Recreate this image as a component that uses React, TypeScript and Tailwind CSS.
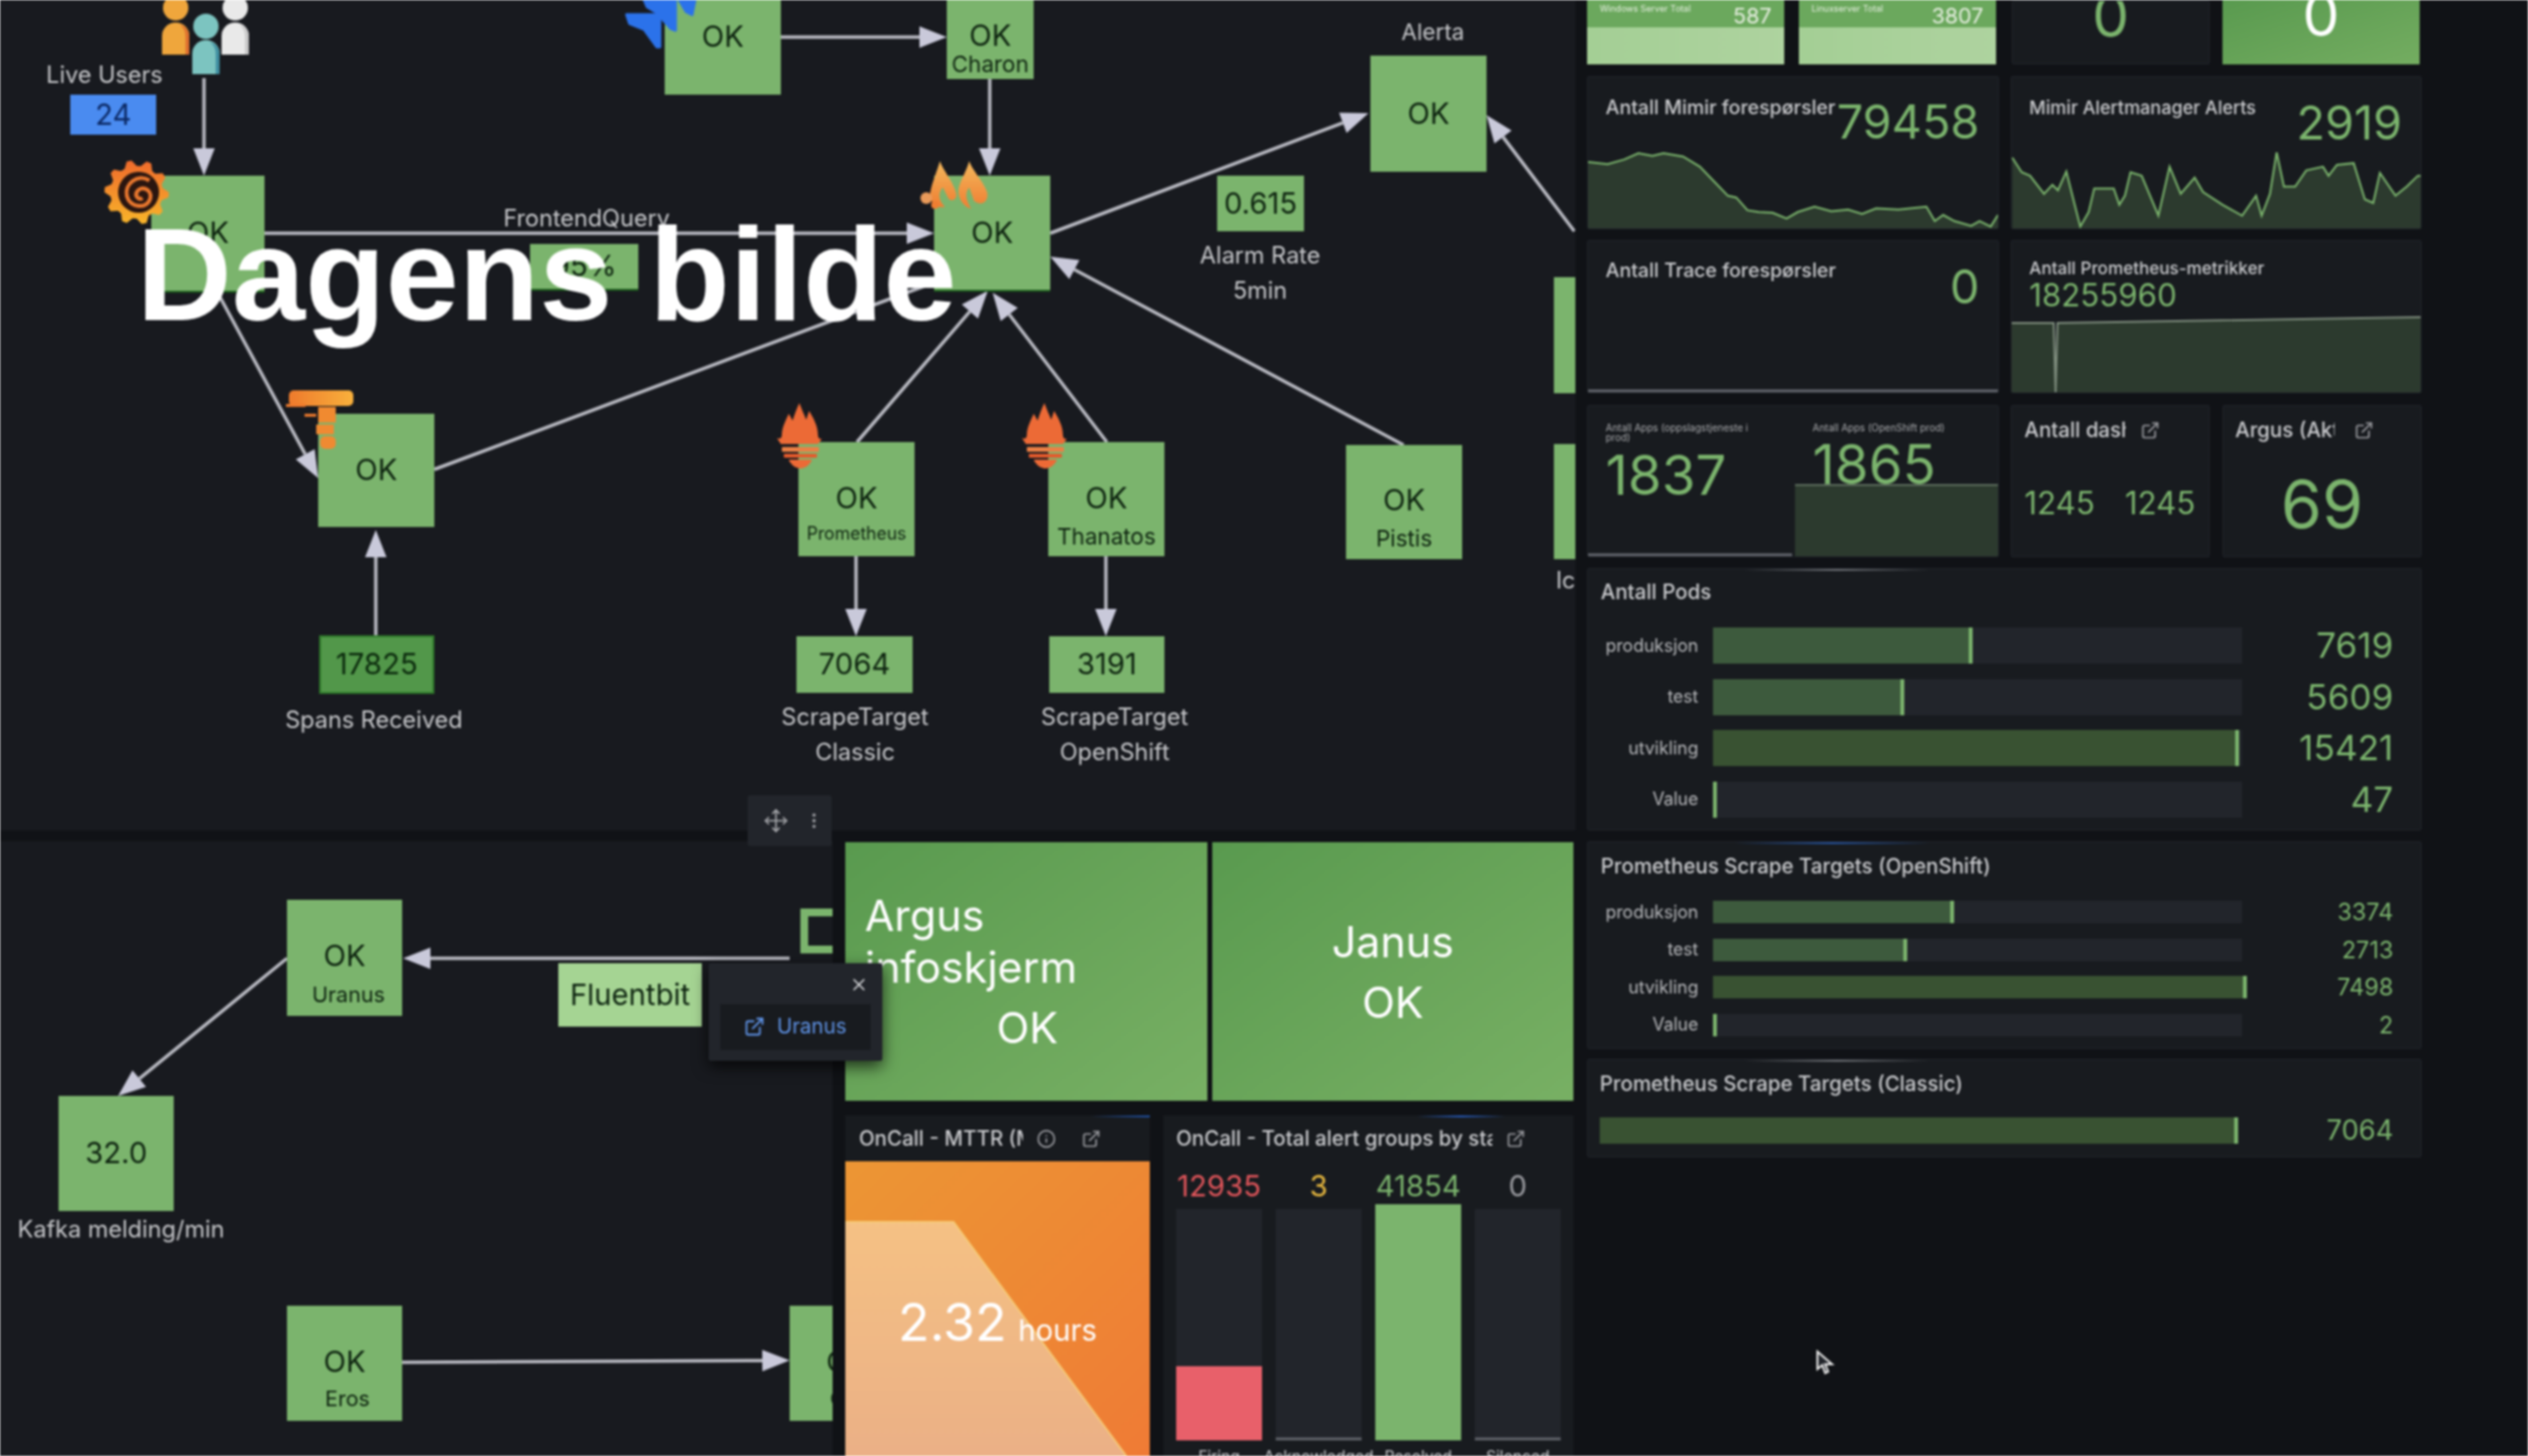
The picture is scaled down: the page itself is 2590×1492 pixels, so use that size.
import { ExternalLink, Info, Move, EllipsisVertical, X } from "lucide-react";
import type { ReactNode } from "react";

const LINE = "#b7b8c0";
const HEAD = "#c9c9da";

function Arrow({ x1, y1, x2, y2 }: { x1: number; y1: number; x2: number; y2: number }) {
  const d = Math.hypot(x2 - x1, y2 - y1);
  const ux = (x2 - x1) / d;
  const uy = (y2 - y1) / d;
  const bx = x2 - ux * 28;
  const by = y2 - uy * 28;
  const hw = 11;
  return (
    <g>
      <line x1={x1} y1={y1} x2={bx} y2={by} stroke={LINE} strokeWidth={3.5} />
      <polygon points={`${x2},${y2} ${bx - uy * hw},${by + ux * hw} ${bx + uy * hw},${by - ux * hw}`} fill={HEAD} />
    </g>
  );
}

function Line({ x1, y1, x2, y2 }: { x1: number; y1: number; x2: number; y2: number }) {
  return <line x1={x1} y1={y1} x2={x2} y2={y2} stroke={LINE} strokeWidth={3.5} />;
}

function gear(cx: number, cy: number, r1: number, r2: number, n: number) {
  const pts: string[] = [];
  for (let i = 0; i < n * 4; i++) {
    const a = (i / (n * 4)) * Math.PI * 2;
    const r = i % 4 < 2 ? r2 : r1;
    pts.push(`${(cx + Math.cos(a) * r).toFixed(1)},${(cy + Math.sin(a) * r).toFixed(1)}`);
  }
  return pts.join(" ");
}

function Person({ x, headY, r, bodyTop, bottom, w, color, dark }: { x: number; headY: number; r: number; bodyTop: number; bottom: number; w: number; color: string; dark: string }) {
  return (
    <g>
      <circle cx={x} cy={headY} r={r} fill={color} />
      <path d={`M${x - w} ${bottom} V${bodyTop + w} A${w} ${w} 0 0 1 ${x + w} ${bodyTop + w} V${bottom} Z`} fill={color} />
      <path d={`M${x + w - 4} ${bottom} V${bodyTop + w} A${w} ${w} 0 0 0 ${x + w - 10} ${bodyTop + 2} A${w} ${w} 0 0 1 ${x + w} ${bodyTop + w} V${bottom} Z`} fill={dark} />
    </g>
  );
}

function Torch({ dx }: { dx: number }) {
  return (
    <g transform={`translate(${dx} 0)`} fill="#ec6a36">
      <path d="M819 413 C822 421 824 425 826 430 C827 427 828 424 829 421 C833 428 838 436 838 446 C838 449 840 450 842 450 L838 455 L800 455 L796 449 C799 450 801 449 801 446 C801 438 805 431 808 424 C810 427 811 429 812 431 C814 425 816 419 819 413 Z" />
      <rect x="801" y="458" width="38" height="5" rx="1" fill="#ea7f45" />
      <rect x="803" y="465" width="34" height="4" rx="1" fill="#e65a2c" />
      <path d="M808 471 H832 C829 478 823 480 820 480 C817 480 811 478 808 471 Z" />
    </g>
  );
}

function TopIcons() {
  return (
    <svg className="absolute left-0 top-0 z-20 pointer-events-none" width="1614" height="851">
      <defs>
        <linearGradient id="gf" x1="0" y1="0" x2="0" y2="1">
          <stop offset="0" stopColor="#ef6a2c" />
          <stop offset="1" stopColor="#f8b52a" />
        </linearGradient>
        <linearGradient id="tp" x1="0" y1="0" x2="1" y2="0">
          <stop offset="0" stopColor="#ee7a2c" />
          <stop offset="1" stopColor="#f9b13c" />
        </linearGradient>
        <linearGradient id="mi" x1="0" y1="0" x2="0" y2="1">
          <stop offset="0" stopColor="#f4b85c" />
          <stop offset="1" stopColor="#ef7e32" />
        </linearGradient>
      </defs>
      <Person x={180} headY={8} r={13} bodyTop={23} bottom={56} w={14} color="#efa63c" dark="#dd6f2e" />
      <Person x={241} headY={8} r={13} bodyTop={23} bottom={56} w={14} color="#e9e9e9" dark="#c8c8c8" />
      <Person x={211} headY={27} r={13} bodyTop={41} bottom={76} w={14} color="#7cc4c0" dark="#3f8ea0" />

      <polygon points={gear(140, 197, 27, 33, 10)} fill="url(#gf)" />
      <circle cx="142" cy="197" r="21" fill="#2a1610" />
      <path d="M153 185 C141 177 127 189 130 201 C133 213 151 215 154 203 C156 194 144 189 140 197 C138 202 143 205 146 203" fill="none" stroke="#e9772e" strokeWidth="4" />

      <g strokeLinejoin="round" strokeWidth="3">
        <polygon points="642,15 676,15 676,48 673,48 660,30 645,24" fill="#2b72ea" stroke="#2b72ea" />
        <polygon points="660,0 692,0 692,31 687,29 673,13 663,7" fill="#2b72ea" stroke="#2b72ea" />
        <polygon points="696,0 712,0 709,15 703,12" fill="#2b72ea" stroke="#2b72ea" />
      </g>

      <path d="M963 165 C966 174 975 184 979 196 C982 204 976 207 972 204 L966 192 C962 196 960 204 968 212 C958 214 952 206 953 198 C955 186 960 176 963 165 Z" fill="url(#mi)" />
      <path d="M993 165 C996 174 1006 184 1011 196 C1014 206 1006 212 998 206 L993 192 C988 198 990 206 995 214 C988 212 981 204 982 194 C984 184 990 176 993 165 Z" fill="url(#mi)" />
      <circle cx="949" cy="203" r="6" fill="#e99a5a" />
      <circle cx="958" cy="210" r="4" fill="#ef7e32" />

      <Torch dx={0} />
      <Torch dx={251} />

      <rect x="296" y="400" width="66" height="16" rx="5" fill="url(#tp)" />
      <rect x="293" y="414" width="20" height="3" fill="#ee7a2c" />
      <rect x="326" y="417" width="18" height="16" fill="#f08a30" />
      <rect x="312" y="424" width="12" height="3" fill="#ee7a2c" />
      <rect x="324" y="435" width="18" height="10" fill="#ef8a32" />
      <rect x="328" y="447" width="16" height="13" rx="5" fill="#ef8a32" />
    </svg>
  );
}

function TopEdges() {
  return (
    <svg className="absolute left-0 top-0" width="1614" height="851">
      <Arrow x1={209} y1={80} x2={209} y2={180} />
      <Arrow x1={271} y1={239} x2={957} y2={239} />
      <Arrow x1={800} y1={38} x2={970} y2={38} />
      <Arrow x1={1014} y1={81} x2={1014} y2={180} />
      <Arrow x1={1076} y1={239} x2={1402} y2={116} />
      <Arrow x1={1613} y1={237} x2={1523} y2={118} />
      <Arrow x1={223} y1={300} x2={326} y2={490} />
      <Line x1={445} y1={481} x2={958} y2={289} />
      <Arrow x1={878} y1={453} x2={1012} y2={298} />
      <Arrow x1={1134} y1={453} x2={1017} y2={300} />
      <Arrow x1={1438} y1={456} x2={1076} y2={263} />
      <Arrow x1={877} y1={570} x2={877} y2={652} />
      <Arrow x1={1133} y1={570} x2={1133} y2={652} />
      <Arrow x1={385} y1={652} x2={385} y2={543} />
    </svg>
  );
}

function Node({ className, children }: { className: string; children: ReactNode }) {
  return <div className={`absolute z-10 flex flex-col items-center pb-[2px] text-[30px] leading-[36px] ${className}`}>{children}</div>;
}

const GREEN = "bg-[#7bb46d] text-[#0e2410]";

function Label({ className, children }: { className: string; children: ReactNode }) {
  return <div className={`absolute z-10 -translate-x-1/2 -translate-y-1/2 whitespace-nowrap text-[#c6c7ca] leading-[30px] ${className}`}>{children}</div>;
}

function TopCanvas() {
  return (
    <div className="relative h-[851px] w-[1614px] overflow-hidden bg-[#181a1f]">
      <TopEdges />
      <Label className="left-[107px] top-[77px] text-[24px]">Live Users</Label>
      <Node className="left-[72px] top-[97px] h-[41px] w-[88px] justify-center bg-[#4a8bf0] text-[#0c2a66] text-[27px]">24</Node>
      <Node className={`left-[155px] top-[180px] h-[120px] w-[116px] justify-center border-b-2 border-[#1c5a1c] ${GREEN}`}>OK</Node>
      <Label className="left-[601px] top-[224px] text-[24px]">FrontendQuery</Label>
      <Node className={`left-[543px] top-[250px] h-[48px] w-[111px] justify-center border-b-2 border-[#1c5a1c] text-[27px] ${GREEN}`}>95%</Node>
      <Node className={`left-[681px] top-[-22px] h-[119px] w-[119px] justify-center ${GREEN}`}>OK</Node>
      <Node className={`left-[970px] top-0 h-[81px] w-[89px] pt-[18px] ${GREEN}`}>
        OK
        <span className="text-[23px] leading-[30px] -mt-[3px]">Charon</span>
      </Node>
      <Node className={`left-[957px] top-[180px] h-[119px] w-[119px] justify-center border-b-2 border-[#1c5a1c] ${GREEN}`}>OK</Node>
      <Label className="left-[1468px] top-[33px] text-[23px]">Alerta</Label>
      <Node className={`left-[1404px] top-[57px] h-[119px] w-[119px] justify-center ${GREEN}`}>OK</Node>
      <Node className={`left-[1247px] top-[180px] h-[57px] w-[89px] justify-center text-[28px] ${GREEN}`}>0.615</Node>
      <Label className="left-[1291px] top-[262px] text-[24px]">Alarm Rate</Label>
      <Label className="left-[1291px] top-[298px] text-[24px]">5min</Label>
      <Node className={`left-[326px] top-[424px] h-[116px] w-[119px] justify-center ${GREEN}`}>OK</Node>
      <Node className={`left-[818px] top-[453px] h-[117px] w-[119px] pt-[39px] ${GREEN}`}>
        OK
        <span className="text-[18px] leading-[24px] mt-[7px]">Prometheus</span>
      </Node>
      <Node className={`left-[1074px] top-[453px] h-[117px] w-[119px] pt-[39px] ${GREEN}`}>
        OK
        <span className="text-[23px] leading-[30px] mt-[7px]">Thanatos</span>
      </Node>
      <Node className={`left-[1379px] top-[456px] h-[117px] w-[119px] pt-[38px] ${GREEN}`}>
        OK
        <span className="text-[23px] leading-[30px] mt-[7px]">Pistis</span>
      </Node>
      <Node className="left-[327px] top-[651px] h-[60px] w-[118px] justify-center border-2 border-[#2f7a2a] bg-[#52974a] text-[#0b2a0d] text-[28px]">17825</Node>
      <Node className={`left-[816px] top-[652px] h-[58px] w-[119px] justify-center text-[28px] ${GREEN}`}>7064</Node>
      <Node className={`left-[1075px] top-[652px] h-[58px] w-[118px] justify-center text-[28px] ${GREEN}`}>3191</Node>
      <Label className="left-[383px] top-[738px] text-[24px]">Spans Received</Label>
      <Label className="left-[876px] top-[735px] text-[24px]">ScrapeTarget</Label>
      <Label className="left-[876px] top-[771px] text-[24px]">Classic</Label>
      <Label className="left-[1142px] top-[735px] text-[24px]">ScrapeTarget</Label>
      <Label className="left-[1142px] top-[771px] text-[24px]">OpenShift</Label>
      <Node className={`left-[1592px] top-[284px] h-[119px] w-[119px] ${GREEN}`}> </Node>
      <Node className={`left-[1592px] top-[455px] h-[118px] w-[119px] ${GREEN}`}> </Node>
      <Label className="left-[1604px] top-[595px] text-[24px]">Ic</Label>
      <TopIcons />
    </div>
  );
}

function BottomCanvas() {
  return (
    <div className="relative h-[630px] w-[853px] overflow-hidden bg-[#181a1f]">
      <svg className="absolute left-0 top-0" width="853" height="630">
        <Arrow x1={809} y1={120} x2={413} y2={120} />
        <Arrow x1={294} y1={120} x2={121} y2={261} />
        <Arrow x1={412} y1={534} x2={809} y2={532} />
      </svg>
      <Node className={`left-[294px] top-[60px] h-[119px] w-[118px] pt-[39px] ${GREEN}`}>
        OK
        <span className="text-[22px] leading-[30px] mt-[7px] ml-[8px]">Uranus</span>
      </Node>
      <Node className="left-[572px] top-[125px] h-[65px] w-[147px] justify-center bg-[#a5d493] text-[#0e2410] text-[30px]">Fluentbit</Node>
      <div className="absolute left-[820px] top-[69px] h-[46px] w-[60px] border-[8px] border-[#7bb46d] bg-[#181a1f]" />
      <Node className={`left-[60px] top-[261px] h-[118px] w-[118px] justify-center text-[28px] ${GREEN}`}>32.0</Node>
      <Label className="left-[124px] top-[398px] text-[24px]">Kafka melding/min</Label>
      <Node className={`left-[294px] top-[476px] h-[118px] w-[118px] pt-[39px] ${GREEN}`}>
        OK
        <span className="text-[22px] leading-[30px] mt-[5px] ml-[6px]">Eros</span>
      </Node>
      <Node className={`left-[809px] top-[476px] h-[118px] w-[118px] pt-[39px] ${GREEN}`}>
        OK
        <span className="text-[22px] leading-[30px] mt-[5px] ml-[40px]">Charon</span>
      </Node>
    </div>
  );
}

function StatusTile({ className, children }: { className: string; children: ReactNode }) {
  return <div className={`flex flex-col items-center justify-center bg-gradient-to-br from-[#599a4f] to-[#78b064] text-white text-[44px] leading-[62px] h-[265px] ${className}`}>{children}</div>;
}

function TitleClip({ className, children }: { className: string; children: ReactNode }) {
  return <div className={`overflow-hidden whitespace-nowrap text-[21px] leading-[24px] font-medium text-[#c9cacd] ${className}`}>{children}</div>;
}

function Middle() {
  const cols = [
    { v: "12935", c: "text-[#e0555a]", h: 76, f: "bg-[#e8606a]", l: "Firing" },
    { v: "3", c: "text-[#e8b93f]", h: 3, f: "bg-[#5c5f66]", l: "Acknowledged" },
    { v: "41854", c: "text-[#7bb46d]", h: 242, f: "bg-[#7bb46d]", l: "Resolved" },
    { v: "0", c: "text-[#9a9ba0]", h: 3, f: "bg-[#5c5f66]", l: "Silenced" },
  ];
  return (
    <div className="flex w-[747px] flex-col pt-[1px]">
      <div className="flex gap-[5px]">
        <StatusTile className="w-[371px]">
          <div className="w-full pl-[20px]">Argus</div>
          <div className="w-full pl-[20px] -mt-[9px]">infoskjerm</div>
          <div className="pl-[2px]">OK</div>
        </StatusTile>
        <StatusTile className="w-[370px]">
          <div>Janus</div>
          <div>OK</div>
        </StatusTile>
      </div>
      <div className="mt-[15px] flex gap-[14px]">
        <div className="relative flex h-[349px] w-[312px] flex-col overflow-hidden bg-[#181b1f]">
          <div className="absolute right-0 top-0 h-[2px] w-[60px] bg-gradient-to-r from-transparent to-[#1f4fa0]" />
          <div className="flex h-[47px] shrink-0 items-center pl-[14px]">
            <TitleClip className="w-[168px]">OnCall - MTTR (MTTA)</TitleClip>
            <Info size={20} className="ml-[14px] text-[#9a9ba0]" />
            <ExternalLink size={20} className="ml-[26px] text-[#9a9ba0]" />
          </div>
          <div className="relative flex-1 bg-gradient-to-br from-[#ec9634] to-[#ef7b35]">
            <svg className="absolute left-0 top-0" width="312" height="302">
              <defs>
                <linearGradient id="ora" x1="0" y1="0" x2="0" y2="1">
                  <stop offset="0" stopColor="#f5c184" />
                  <stop offset="1" stopColor="#ebb086" />
                </linearGradient>
              </defs>
              <polygon points="0,62 111,62 288,302 0,302" fill="url(#ora)" />
              <polyline points="0,62 111,62 288,302" fill="none" stroke="#f7cf78" strokeWidth="1.5" />
            </svg>
            <div className="relative flex items-baseline justify-center gap-[12px] pt-[130px] text-white">
              <span className="text-[53px] leading-[70px]">2.32</span>
              <span className="text-[30px] leading-[40px]">hours</span>
            </div>
          </div>
        </div>
        <div className="relative flex h-[349px] w-[420px] flex-col overflow-hidden bg-[#181b1f] px-[13px]">
          <div className="absolute right-[70px] top-0 h-[2px] w-[90px] bg-gradient-to-r from-transparent via-[#2456b0] to-transparent" />
          <div className="flex h-[47px] shrink-0 items-center">
            <TitleClip className="w-[324px]">OnCall - Total alert groups by state</TitleClip>
            <ExternalLink size={20} className="ml-[14px] text-[#9a9ba0]" />
          </div>
          <div className="flex gap-[14px]">
            {cols.map((c) => (
              <div key={c.v} className="flex w-[88px] flex-col items-center">
                <div className={`h-[49px] pt-[7px] text-[30px] leading-[36px] ${c.c}`}>{c.v}</div>
                <div className="flex h-[237px] w-full flex-col justify-end bg-[#22252b]">
                  <div className={`w-full shrink-0 ${c.f}`} style={{ height: c.h }} />
                </div>
                <div className="mt-[6px] whitespace-nowrap text-[16px] leading-[20px] text-[#c6c7ca]">{c.l}</div>
              </div>
            ))}
          </div>
        </div>
      </div>
    </div>
  );
}

function Panel({ className, children }: { className: string; children: ReactNode }) {
  return <div className={`relative overflow-hidden rounded-[2px] border border-[#202329] bg-[#181b1f] ${className}`}>{children}</div>;
}

const mimirA = "45,452 80,458 110,445 135,428 160,435 180,428 215,437 245,465 270,505 295,545 310,550 330,585 350,590 375,592 400,608 420,590 450,575 480,588 510,583 535,595 560,580 600,583 650,575 665,615 680,598 700,615 730,628 745,615 765,630 778,598";
const mimirB = "803,440 820,480 835,490 860,540 875,515 885,530 900,478 915,570 925,630 940,590 950,525 985,525 995,570 1005,545 1015,480 1035,490 1065,600 1085,465 1105,540 1130,495 1145,535 1180,570 1215,600 1240,545 1250,600 1265,540 1277,425 1290,520 1310,520 1330,475 1360,465 1370,490 1385,460 1415,455 1435,555 1450,565 1462,482 1490,545 1510,520 1530,490 1535,490";

function Spark({ box, pts, first, last }: { box: string; pts: string; first: number; last: number }) {
  return (
    <svg className="mt-auto block h-[78px] w-full shrink-0" viewBox={box} preserveAspectRatio="none">
      <polygon points={`${first},640 ${pts} ${last},640`} fill="#2c3a2e" />
      <polyline points={pts} fill="none" stroke="#7bb46d" strokeWidth="2" vectorEffect="non-scaling-stroke" />
    </svg>
  );
}

function TopTile({ title, value }: { title: string; value: string }) {
  return (
    <div className="flex h-[66px] w-[202px] flex-col bg-gradient-to-r from-[#a4cf95] to-[#aed39f]">
      <div className="flex h-[28px] items-start justify-between bg-[#6ba85d] px-[13px] text-[#e6eee0]">
        <span className="pt-[3px] text-[9px] leading-[12px]">{title}</span>
        <span className="pt-[3px] text-[22px] leading-[26px]">{value}</span>
      </div>
    </div>
  );
}

function BarRow({ label, value, w, h, fs, fill }: { label: string; value: string; w: number; h: string; fs: string; fill: string }) {
  return (
    <div className="flex items-center">
      <div className="w-[112px] text-right text-[18px] leading-[22px] text-[#b9babd]">{label}</div>
      <div className={`ml-[15px] w-[542px] bg-[#22252b] ${h}`}>
        <div className={`h-full border-r-[4px] border-[#7bb46d] ${fill}`} style={{ width: w }} />
      </div>
      <div className={`flex-1 pr-[28px] text-right text-[#7bb46d] ${fs}`}>{value}</div>
    </div>
  );
}

function Right() {
  const title = "text-[20px] leading-[24px] font-medium text-[#c9cacd]";
  const titleB = "text-[21px] leading-[24px] font-medium text-[#c9cacd]";
  const metric = "text-[#7bb46d]";
  const ext = "text-[#9a9ba0] shrink-0";
  return (
    <div className="ml-[12px] flex w-[855px] flex-col">
      <div className="flex h-[66px]">
        <TopTile title="Windows Server Total" value="587" />
        <div className="ml-[15px]"><TopTile title="Linuxserver Total" value="3807" /></div>
        <Panel className="ml-[16px] w-[203px] text-center">
          <div className={`-mt-[15px] text-[60px] leading-[60px] ${metric}`}>0</div>
        </Panel>
        <div className="ml-[13px] h-[66px] w-[202px] overflow-hidden bg-gradient-to-br from-[#599a4f] to-[#74ad61] text-center text-white">
          <div className="-mt-[15px] text-[60px] leading-[60px]">0</div>
        </div>
      </div>

      <div className="mt-[12px] flex h-[157px] gap-[12px]">
        <Panel className="flex w-[422px] flex-col">
          <div className="flex items-start justify-between pl-[18px] pr-[19px] pt-[19px]">
            <span className={title}>Antall Mimir forespørsler</span>
            <span className={`mt-[3px] text-[48px] leading-[48px] ${metric}`}>79458</span>
          </div>
          <Spark box="45 425 733 210" pts={mimirA} first={45} last={778} />
        </Panel>
        <Panel className="flex w-[421px] flex-col">
          <div className="flex items-start justify-between pl-[18px] pr-[19px] pt-[19px]">
            <span className="text-[18.5px] leading-[24px] font-medium text-[#c9cacd]">Mimir Alertmanager Alerts</span>
            <span className={`mt-[4px] text-[48px] leading-[48px] ${metric}`}>2919</span>
          </div>
          <Spark box="802 425 733 210" pts={mimirB} first={803} last={1535} />
        </Panel>
      </div>

      <div className="mt-[11px] flex h-[157px] gap-[12px]">
        <Panel className="flex w-[422px] flex-col">
          <div className="flex items-start justify-between pl-[18px] pr-[19px] pt-[18px]">
            <span className={title}>Antall Trace forespørsler</span>
            <span className={`mt-[5px] text-[48px] leading-[48px] ${metric}`}>0</span>
          </div>
          <div className="mt-auto h-[3px] shrink-0 bg-[#5c5f66]" />
        </Panel>
        <Panel className="flex w-[421px] flex-col">
          <div className="pl-[18px] pt-[17px]">
            <div className="text-[17.5px] leading-[22px] font-medium text-[#c9cacd]">Antall Prometheus-metrikker</div>
            <div className={`text-[32px] leading-[34px] ${metric}`}>18255960</div>
          </div>
          <svg className="mt-auto block shrink-0" width="421" height="80">
            <polygon points="0,9 43,9 45,80 47,9 421,3 421,80 0,80" fill="#2c3a2e" />
            <polyline points="0,9 43,9 45,80 47,9 421,3" fill="none" stroke="#7d8b7c" strokeWidth="2" />
          </svg>
        </Panel>
      </div>

      <div className="mt-[12px] flex h-[156px]">
        <Panel className="flex w-[422px] gap-[4px]">
          <div className="flex w-[209px] flex-col pl-[18px] pt-[17px]">
            <div className="h-[20px] w-[150px] text-[10px] leading-[10px] text-[#a9aaad]">Antall Apps (oppslagstjeneste i prod)</div>
            <div className={`mt-[6px] text-[56px] leading-[56px] ${metric}`}>1837</div>
          </div>
          <div className="relative w-[209px] pl-[18px] pt-[17px]">
            <div className="absolute inset-x-0 bottom-0 h-[74px] border-t-2 border-[#5a6a5a] bg-[#2c3a2e]" />
            <div className="relative h-[10px] text-[10px] leading-[10px] text-[#a9aaad]">Antall Apps (OpenShift prod)</div>
            <div className={`relative mt-[5px] text-[56px] leading-[56px] ${metric}`}>1865</div>
          </div>
          <div className="absolute bottom-0 left-0 h-[3px] w-[209px] bg-[#5c5f66]" />
        </Panel>
        <Panel className="ml-[12px] w-[204px] pl-[13px] pt-[13px]">
          <div className="flex items-center">
            <TitleClip className="w-[104px]">Antall dashboards</TitleClip>
            <ExternalLink size={20} className={`ml-[15px] ${ext}`} />
          </div>
          <div className={`mt-[43px] flex text-[32px] leading-[40px] ${metric}`}>
            <span className="w-[103px]">1245</span>
            <span>1245</span>
          </div>
        </Panel>
        <Panel className="ml-[13px] w-[204px] pl-[12px] pt-[13px]">
          <div className="flex items-center">
            <TitleClip className="w-[102px]">Argus (Aktive)</TitleClip>
            <ExternalLink size={20} className={`ml-[20px] ${ext}`} />
          </div>
          <div className={`mt-[29px] pr-[12px] text-center text-[68px] leading-[68px] ${metric}`}>69</div>
        </Panel>
      </div>

      <Panel className="mt-[11px] h-[269px] pl-[1px] pt-[12px]">
        <div className="absolute left-[160px] top-0 h-[2px] w-[190px] bg-gradient-to-r from-transparent via-[#6a6d72] to-transparent" />
        <div className={`pl-[12px] ${titleB}`}>Antall Pods</div>
        <div className="mt-[24px] flex flex-col gap-[15.5px]">
          <BarRow label="produksjon" value="7619" w={266} h="h-[37px]" fs="text-[36px] leading-[37px]" fill="bg-[#3d5a3d]" />
          <BarRow label="test" value="5609" w={196} h="h-[37px]" fs="text-[36px] leading-[37px]" fill="bg-[#3d5a3d]" />
          <BarRow label="utvikling" value="15421" w={539} h="h-[37px]" fs="text-[36px] leading-[37px]" fill="bg-[#395232]" />
          <BarRow label="Value" value="47" w={4} h="h-[37px]" fs="text-[36px] leading-[37px]" fill="bg-[#3d5a3d]" />
        </div>
      </Panel>

      <Panel className="mt-[11px] h-[213px] pl-[1px] pt-[13px]">
        <div className="absolute left-[150px] top-0 h-[2px] w-[200px] bg-gradient-to-r from-transparent via-[#24509a] to-transparent" />
        <div className={`pl-[12px] ${titleB}`}>Prometheus Scrape Targets (OpenShift)</div>
        <div className="mt-[23px] flex flex-col gap-[15.5px]">
          <BarRow label="produksjon" value="3374" w={247} h="h-[23px]" fs="text-[24px] leading-[23px]" fill="bg-[#3d5a3d]" />
          <BarRow label="test" value="2713" w={199} h="h-[23px]" fs="text-[24px] leading-[23px]" fill="bg-[#3d5a3d]" />
          <BarRow label="utvikling" value="7498" w={547} h="h-[23px]" fs="text-[24px] leading-[23px]" fill="bg-[#395232]" />
          <BarRow label="Value" value="2" w={4} h="h-[23px]" fs="text-[24px] leading-[23px]" fill="bg-[#3d5a3d]" />
        </div>
      </Panel>

      <Panel className="mt-[10px] h-[101px] pl-[12px] pt-[13px]">
        <div className="absolute left-[160px] top-0 h-[2px] w-[190px] bg-gradient-to-r from-transparent via-[#6a6d72] to-transparent" />
        <div className={titleB}>Prometheus Scrape Targets (Classic)</div>
        <div className="mt-[22px] flex items-center">
          <div className="h-[27px] w-[654px] border-r-[4px] border-[#7bb46d] bg-[#395232]" />
          <div className={`flex-1 pr-[28px] text-right text-[28px] leading-[27px] ${metric}`}>7064</div>
        </div>
      </Panel>
    </div>
  );
}

export default function App() {
  return (
    <div className="relative flex h-[1492px] w-[2590px] overflow-hidden bg-[#101216] font-[family-name:Inter,sans-serif] blur-[0.8px]">
      <div className="flex w-[1614px] flex-col gap-[11px]">
        <TopCanvas />
        <div className="flex gap-[13px]">
          <BottomCanvas />
          <Middle />
        </div>
      </div>
      <Right />

      <div className="absolute left-[766px] top-[815px] z-30 flex h-[52px] w-[86px] items-center justify-center gap-[16px] rounded-[2px] bg-[#22252b] text-[#a8a9ad]">
        <Move size={26} strokeWidth={1.5} />
        <EllipsisVertical size={20} strokeWidth={2} className="-mr-[8px]" />
      </div>

      <div className="absolute left-[726px] top-[987px] z-30 w-[178px] rounded-[2px] bg-[#22252b] px-[12px] pb-[11px] pt-[12px] shadow-[0_6px_16px_rgba(0,0,0,0.7)]">
        <div className="flex h-[30px] justify-end pr-[2px] text-[#d5d6d8]">
          <X size={20} />
        </div>
        <div className="flex h-[47px] items-center gap-[12px] bg-[#181b1f] pb-[2px] pl-[24px] text-[21px] text-[#5f93e6]">
          <ExternalLink size={22} />
          <span>Uranus</span>
        </div>
      </div>

      <div className="absolute left-[140px] top-[205px] z-40 whitespace-nowrap font-[family-name:'Liberation_Sans',Arial,sans-serif] text-[135px] font-bold leading-[154px] text-white">
        Dagens bilde
      </div>

      <svg className="absolute left-[1860px] top-[1383px] z-40" width="22" height="28" viewBox="0 0 22 28">
        <path d="M2 2 L2 20 L7 16 L10 24 L13 22.5 L10 15 L17 15 Z" fill="#22252b" stroke="#e8e8e8" strokeWidth="2" />
      </svg>
    </div>
  );
}
